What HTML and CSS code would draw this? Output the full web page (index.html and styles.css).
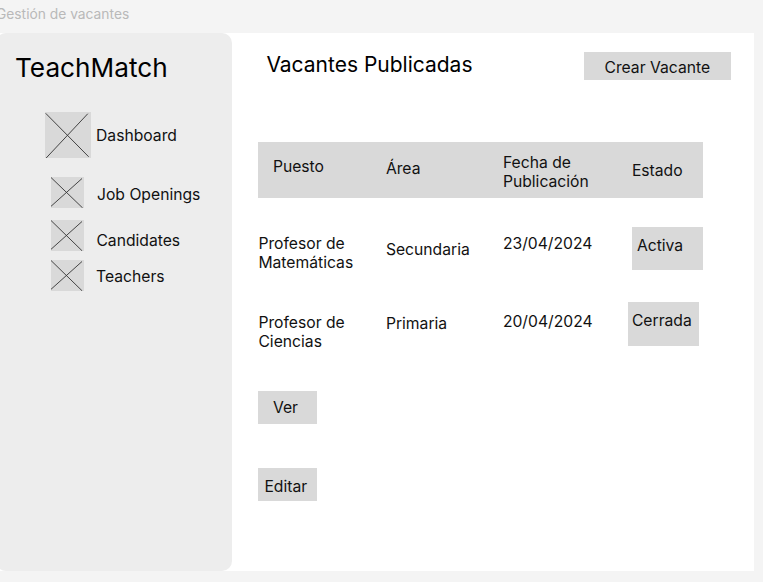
FILE: index.html
```html
<!DOCTYPE html>
<html lang="es">
<head>
<meta charset="utf-8">
<title>Gestión de vacantes</title>
<link rel="stylesheet" href="styles.css">
</head>
<body>
<div class="frame-label">Gestión de vacantes</div>
<div class="frame">
  <aside class="sidebar">
    <h1 class="brand">TeachMatch</h1>
    <nav class="nav">
      <a class="nav-item dashboard"><svg class="icon" viewBox="0 0 46 46" preserveAspectRatio="none"><path d="M.7 1.3 43.7 44.3M.7 46 42.8 1.7"/></svg><span>Dashboard</span></a>
      <a class="nav-item openings"><svg class="icon" viewBox="0 0 33 31" preserveAspectRatio="none"><path d="M0 .5 31.7 31M0 29.3 31 1.5"/></svg><span>Job Openings</span></a>
      <a class="nav-item candidates"><svg class="icon" viewBox="0 0 33 31" preserveAspectRatio="none"><path d="M0 .5 31.3 31M0 29.3 31 1.5"/></svg><span>Candidates</span></a>
      <a class="nav-item teachers"><svg class="icon" viewBox="0 0 33 31" preserveAspectRatio="none"><path d="M0 .5 31.3 31M0 29.3 31 1.5"/></svg><span>Teachers</span></a>
    </nav>
  </aside>
  <main class="content">
    <header class="topbar">
      <h2 class="title">Vacantes Publicadas</h2>
      <button class="button create">Crear Vacante</button>
    </header>
    <section class="table">
      <div class="row head">
        <div class="c-post">Puesto</div>
        <div class="c-area">Área</div>
        <div class="c-date">Fecha de<br>Publicación</div>
        <div class="c-state">Estado</div>
      </div>
      <div class="row first">
        <div class="c-post">Profesor de<br>Matemáticas</div>
        <div class="c-area">Secundaria</div>
        <div class="c-date">23/04/2024</div>
        <div class="status active">Activa</div>
      </div>
      <div class="row second">
        <div class="c-post">Profesor de<br>Ciencias</div>
        <div class="c-area">Primaria</div>
        <div class="c-date">20/04/2024</div>
        <div class="status closed">Cerrada</div>
      </div>
    </section>
    <div class="actions">
      <button class="button view">Ver</button>
      <button class="button edit">Editar</button>
    </div>
  </main>
</div>
</body>
</html>
```
FILE: styles.css
```css
* { box-sizing: border-box; }

body {
  margin: 0;
  height: 582px;
  overflow: hidden;
  background: #f4f4f4;
  color: #111;
  font: 400 15.7px/19px Inter, "Liberation Sans", sans-serif;
}

.frame-label {
  height: 32.5px;
  margin-left: -4px;
  padding-top: 5px;
  color: #b9b9b9;
  font-size: 13.8px;
}

.frame {
  display: flex;
  width: 758px;
  height: 538.5px;
  margin-left: -4px;
  background: #fff;
}

.sidebar {
  width: 236px;
  flex: none;
  padding: 19px 0 0 19px;
  border-radius: 10px;
  background: #ededed;
}

.brand {
  margin: 0;
  color: #000;
  font-size: 26.2px;
  font-weight: 400;
  line-height: 31px;
}

.nav { padding: 29px 0 0 30px; }

.nav-item { display: flex; }

.icon {
  display: block;
  flex: none;
  width: 33px;
  height: 31px;
  background: #d9d9d9;
  fill: none;
  stroke: #333;
  stroke-width: .9;
}

.dashboard .icon { width: 46px; height: 46.5px; }
.dashboard span { padding: 14.5px 0 0 5px; }
.openings { margin: 19px 0 0 6px; }
.openings span { padding: 8px 0 0 13px; }
.candidates { margin: 12.3px 0 0 6.4px; }
.candidates span { padding: 10.6px 0 0 12px; }
.teachers { margin: 9px 0 0 6.4px; }
.teachers span { padding: 6.6px 0 0 11.6px; }

.content { flex: 1; padding: 19px 23px 0 26.4px; }

.topbar {
  display: flex;
  justify-content: space-between;
  height: 90.5px;
}

.title {
  margin: 0;
  padding-left: 8px;
  color: #000;
  font-size: 21px;
  font-weight: 400;
  line-height: 26px;
}

.button {
  display: block;
  border: 0;
  background: #d9d9d9;
  color: inherit;
  font: inherit;
}

.create { width: 147.4px; height: 28px; padding: 3px 0 0; }

.table { width: 445px; }

.row {
  display: grid;
  grid-template-columns: 127.5px 117px 129px 71.5px;
  align-items: start;
}

.head { height: 55.6px; background: #d9d9d9; }
.head .c-post { padding: 14.5px 0 0 14.5px; }
.head .c-area { padding-top: 16.5px; }
.head .c-date { padding-top: 11px; }
.head .c-state { padding-top: 19px; }

.first { height: 75.2px; margin-top: 29.4px; }
.first .c-post { padding-top: 6.9px; }
.first .c-area { padding-top: 13px; }
.first .c-date { padding-top: 6.9px; }

.second { height: 44px; }
.second .c-post { padding-top: 10.8px; }
.second .c-area { padding-top: 11.8px; }
.second .c-date { padding-top: 9.8px; }

.status { width: 71.5px; height: 43.5px; background: #d9d9d9; }
.active { padding: 8.6px 0 0 5px; }
.closed { margin-left: -4px; padding: 8.6px 0 0 4px; }

.actions {
  display: grid;
  gap: 43.5px;
  padding-top: 45.3px;
}

.view, .edit { width: 58.5px; height: 33px; text-align: left; }
.view { padding: 0 0 0 14.5px; }
.edit { padding: 4px 0 0 6px; }
```
